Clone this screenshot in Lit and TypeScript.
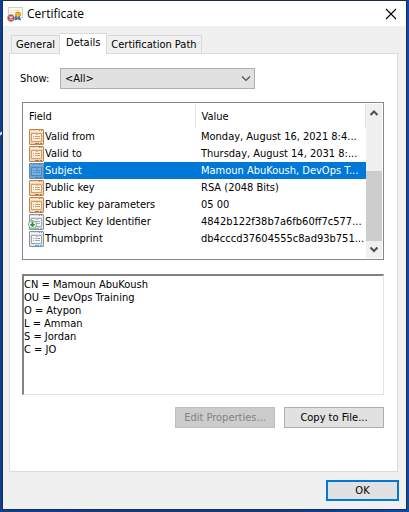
import { LitElement, html, css, svg } from "lit";
import { customElement, property, state } from "lit/decorators.js";
import { classMap } from "lit/directives/class-map.js";

type FieldKind = "standard" | "extension" | "property";

interface CertField {
  name: string;
  value: string;
  kind: FieldKind;
  detail?: string;
}

const FIELDS: CertField[] = [
  { name: "Valid from", value: "Monday, August 16, 2021 8:4...", kind: "standard" },
  { name: "Valid to", value: "Thursday, August 14, 2031 8:...", kind: "standard" },
  {
    name: "Subject",
    value: "Mamoun AbuKoush, DevOps T...",
    kind: "standard",
    detail:
      "CN = Mamoun AbuKoush\nOU = DevOps Training\nO = Atypon\nL = Amman\nS = Jordan\nC = JO",
  },
  { name: "Public key", value: "RSA (2048 Bits)", kind: "standard" },
  { name: "Public key parameters", value: "05 00", kind: "standard" },
  { name: "Subject Key Identifier", value: "4842b122f38b7a6fb60ff7c577...", kind: "extension" },
  { name: "Thumbprint", value: "db4cccd37604555c8ad93b751...", kind: "property" },
];

const PALETTES = {
  standard: { edge: "#b5895f", fill: "#fbd2a6", line: "#cf9f72", foot: "#a9794e", paper: "#ffeedd" },
  extension: { edge: "#89939b", fill: "#dde3e7", line: "#9fa9b0", foot: "#a3adb4", paper: "#f5f8fa" },
  property: { edge: "#89939b", fill: "#dde3e7", line: "#9fa9b0", foot: "#2cc4f2", paper: "#f5f8fa" },
  selected: { edge: "#5c8bb4", fill: "#6ba6d6", line: "#4b88bb", foot: "#4680ae", paper: "#78b0de" },
};

@customElement("field-icon")
export class FieldIcon extends LitElement {
  @property() kind: FieldKind = "standard";
  @property({ type: Boolean }) selected = false;

  static styles = css`
    :host {
      display: block;
      width: 16px;
      height: 16px;
    }
    svg {
      display: block;
    }
  `;

  render() {
    const p = this.selected ? PALETTES.selected : PALETTES[this.kind];
    return html`
      <svg width="16" height="16" viewBox="0 0 16 16" aria-hidden="true">
        <rect x="1.5" y="0.5" width="14" height="15" rx="0.5" fill=${p.fill} stroke=${p.edge} />
        <path d="M2 2.5H15" stroke=${p.paper} />
        <path d="M11 1.5H12M13 1.5H14" stroke=${p.edge} />
        <path d="M3.5 4.5H8.5V5.5H9.5V4.5H13.5V12.5H3.5Z" fill=${p.paper} stroke=${p.line} />
        <path d="M5 7.5H6M7 7.5H12M5 9.5H6M7 9.5H12" stroke=${p.line} />
        <path d="M7 14.5H11M12 14.5H14" stroke=${p.foot} />
        ${this.kind === "extension"
          ? svg`
            <circle cx="4.5" cy="10.5" r="4" fill="#ffffff" stroke="#8b9498" />
            <path d="M3.5 7.5H5.5V10H7.5L4.5 13.5L1.5 10H3.5Z" fill="#22a332" />`
          : ""}
      </svg>
    `;
  }
}

@customElement("app-root")
export class AppRoot extends LitElement {
  @state() private tab = "Details";
  @state() private selected = 2;

  static styles = css`
    :host {
      display: block;
      position: relative;
      box-sizing: border-box;
      min-height: 100vh;
      padding: 0 2px 2px;
      background: linear-gradient(90deg, #0d3f92, #12397f 30%, #12397f 70%, #0a4ba8);
      color: #000;
      font: 11px/13px "DejaVu Sans Condensed", "Noto Sans", sans-serif;
    }
    * {
      box-sizing: border-box;
    }
    button,
    select,
    textarea {
      margin: 0;
      border-radius: 0;
      font: inherit;
      color: inherit;
    }
    .desktop-mark {
      position: absolute;
      top: 130px;
      left: 0;
    }
    .window {
      border: 1px solid #1c2c4c;
      background: #f0f0f0;
    }
    .titlebar {
      display: flex;
      align-items: center;
      height: 25px;
      padding: 0 9px 0 4px;
      background: #fff;
    }
    .titlebar h1 {
      flex: 1;
      margin: 0 0 0 4px;
      font: 12px/16px "Open Sans", "Noto Sans", sans-serif;
    }
    .close {
      display: flex;
      padding: 0;
      border: 0;
      background: none;
    }
    .body {
      padding: 7px 7px 8px 6px;
    }
    .tabs {
      display: flex;
      align-items: flex-end;
      padding-left: 2px;
    }
    .tab {
      height: 18px;
      padding: 0 4px;
      border: 1px solid #d9d9d9;
      border-bottom: 0;
      border-left-width: 0;
      background: #f0f0f0;
      white-space: nowrap;
    }
    .tab:first-child {
      border-left-width: 1px;
    }
    .tab.active {
      z-index: 1;
      height: 21px;
      margin-bottom: -1px;
      padding: 0 6px 3px;
      background: #fff;
    }
    .page {
      margin-right: 1px;
      padding: 14px 13px 43px 12px;
      border: 1px solid #dcdcdc;
      background: #fff;
    }
    .show {
      display: flex;
      align-items: center;
      margin-left: -2px;
    }
    .show label {
      width: 40px;
    }
    .picker {
      display: grid;
      width: 195px;
      align-items: center;
    }
    .picker select,
    .picker svg {
      grid-area: 1 / 1;
    }
    .picker select {
      appearance: none;
      height: 21px;
      padding: 0 4px;
      border: 1px solid #adadad;
      background: #e1e1e1;
    }
    .picker svg {
      justify-self: end;
      margin-right: 4px;
      pointer-events: none;
    }
    .list {
      display: flex;
      height: 158px;
      margin-top: 13px;
      padding: 1px;
      border: 1px solid #828790;
    }
    .grid {
      flex: 1;
      min-width: 0;
    }
    table {
      width: 100%;
      border-collapse: collapse;
      table-layout: fixed;
    }
    th,
    td {
      padding: 0;
      font-weight: normal;
      text-align: left;
      white-space: nowrap;
      overflow: hidden;
    }
    th {
      height: 24px;
      padding-left: 5px;
      border-right: 1px solid #e5e5e5;
    }
    th.field {
      width: 171px;
    }
    th + th {
      padding-left: 6px;
    }
    tbody td {
      height: 17px;
      padding-left: 6px;
    }
    tbody td:first-child {
      padding-left: 4px;
    }
    .name {
      display: flex;
      align-items: center;
      height: 17px;
    }
    .name span {
      flex: 1;
      padding-left: 1px;
      line-height: 17px;
    }
    .selected td + td,
    .selected .name span {
      background: #0078d7;
      color: #fff;
    }
    .scrollbar {
      display: flex;
      flex-direction: column;
      width: 16px;
      background: #f0f0f0;
    }
    .scrollbar svg {
      flex: none;
    }
    .track {
      display: flex;
      flex: 1;
      flex-direction: column;
      justify-content: flex-end;
    }
    .thumb {
      height: 70px;
      background: #cdcdcd;
    }
    textarea {
      display: block;
      width: 100%;
      height: 121px;
      margin-top: 14px;
      padding: 2px 0;
      border: 1px solid #e3e3e3;
      border-top: 2px solid #828282;
      border-left: 2px solid #828282;
      background: #fff;
      resize: none;
      outline: none;
    }
    .actions {
      display: flex;
      justify-content: flex-end;
      gap: 9px;
      margin-top: 12px;
    }
    .button {
      width: 100px;
      height: 21px;
      padding: 0;
      border: 1px solid #adadad;
      background: #e1e1e1;
    }
    .button:disabled {
      border-color: #bfbfbf;
      background: #cccccc;
      color: #838383;
    }
    .footer {
      display: flex;
      justify-content: flex-end;
      margin-top: 8px;
    }
    .button.primary {
      width: 73px;
      border: 2px solid #0078d7;
    }
  `;

  private chevron(up: boolean) {
    return html`
      <svg width="16" height="17" viewBox="0 0 16 17" aria-hidden="true">
        <path d=${up ? "M4.5 11L8 7.5L11.5 11" : "M4.5 6.5L8 10L11.5 6.5"} fill="none" stroke="#505050" stroke-width="2" />
      </svg>
    `;
  }

  render() {
    return html`
      <svg class="desktop-mark" width="2" height="6" viewBox="0 0 2 6" aria-hidden="true">
        <path d="M0 5L2 2" stroke="#dfe8f5" stroke-width="2" />
      </svg>
      <main class="window">
        <header class="titlebar">
          <svg width="16" height="16" viewBox="0 0 16 16" aria-hidden="true">
            <rect x="1.5" y="1.5" width="14" height="10" fill="#fbf8f0" stroke="#d6d0c4" />
            <path d="M3 4.5H13M3 6.5H9" stroke="#ece4d4" />
            <path d="M9 10L8 14L10.5 13ZM12 10L13.5 14L11 13Z" fill="#2c6fd0" stroke="#2c6fd0" />
            <circle cx="11" cy="8.5" r="2.5" fill="#f2b929" stroke="#c98a12" />
            <circle cx="4" cy="12" r="3.5" fill="#cf3a3a" stroke="#a9a0a0" stroke-width="0.8" />
            <path d="M2.5 10.5L5.5 13.5M5.5 10.5L2.5 13.5" stroke="#fff" stroke-width="1.2" />
          </svg>
          <h1>Certificate</h1>
          <button class="close" aria-label="Close">
            <svg width="12" height="12" viewBox="0 0 12 12" aria-hidden="true">
              <path d="M1 1L11 11M11 1L1 11" stroke="#000" stroke-width="1.1" />
            </svg>
          </button>
        </header>
        <div class="body">
          <div class="tabs" role="tablist">
            ${["General", "Details", "Certification Path"].map(
              (name) => html`<button
                class=${classMap({ tab: true, active: name === this.tab })}
                role="tab"
                aria-selected=${name === this.tab ? "true" : "false"}
                @click=${() => (this.tab = name)}
              >${name}</button>`
            )}
          </div>
          <section class="page">
            <div class="show">
              <label for="show">Show:</label>
              <div class="picker">
                <select id="show">
                  <option>&lt;All&gt;</option>
                </select>
                <svg width="10" height="7" viewBox="0 0 10 7" aria-hidden="true">
                  <path d="M1 1.5L5 5.5L9 1.5" fill="none" stroke="#505050" stroke-width="1.2" />
                </svg>
              </div>
            </div>
            <div class="list">
              <div class="grid">
                <table>
                  <thead>
                    <tr>
                      <th class="field" scope="col">Field</th>
                      <th scope="col">Value</th>
                    </tr>
                  </thead>
                  <tbody>
                    ${FIELDS.map(
                      (f, i) => html`
                        <tr
                          class=${classMap({ selected: i === this.selected })}
                          @click=${() => (this.selected = i)}
                        >
                          <td>
                            <div class="name">
                              <field-icon .kind=${f.kind} .selected=${i === this.selected}></field-icon>
                              <span>${f.name}</span>
                            </div>
                          </td>
                          <td>${f.value}</td>
                        </tr>
                      `
                    )}
                  </tbody>
                </table>
              </div>
              <div class="scrollbar">
                ${this.chevron(true)}
                <div class="track"><div class="thumb"></div></div>
                ${this.chevron(false)}
              </div>
            </div>
            <textarea
              readonly
              aria-label="Field value"
              .value=${FIELDS[this.selected].detail ?? FIELDS[this.selected].value}
            ></textarea>
            <div class="actions">
              <button class="button" disabled>Edit Properties...</button>
              <button class="button">Copy to File...</button>
            </div>
          </section>
          <div class="footer">
            <button class="button primary">OK</button>
          </div>
        </div>
      </main>
    `;
  }
}
